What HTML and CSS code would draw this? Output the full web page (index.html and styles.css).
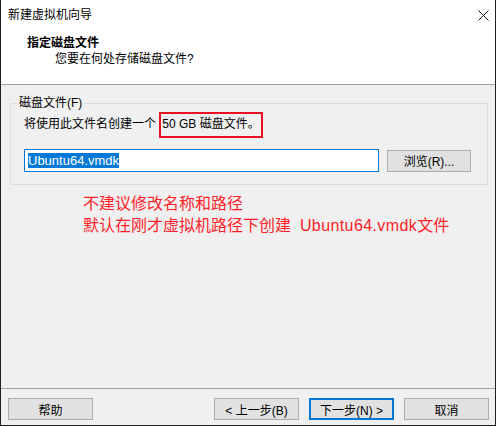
FILE: index.html
```html
<!DOCTYPE html>
<html lang="zh-CN">
  <head>
    <meta charset="UTF-8" />
    <title>新建虚拟机向导</title>
    <link rel="stylesheet" href="styles.css">
  </head>
  <body>
    <div class="window">
      <div class="titlebar">
        <span>新建虚拟机向导</span>
        <svg class="close" width="11" height="11" viewBox="0 0 11 11">
          <path d="M0.5 0.5 L10.5 10.5 M10.5 0.5 L0.5 10.5" stroke="#111" stroke-width="1" fill="none" />
        </svg>
      </div>

      <div class="header">
        <div class="header-title">指定磁盘文件</div>
        <div class="header-sub">您要在何处存储磁盘文件?</div>
      </div>

      <div class="content">
        <fieldset class="group">
          <legend>磁盘文件(F)</legend>
          <div class="info">将使用此文件名创建一个 <span class="mark">50 GB 磁盘文件。</span></div>
          <div class="file-row">
            <div class="file-input"><span class="selected">Ubuntu64.vmdk</span></div>
            <button class="btn browse">浏览(R)...</button>
          </div>
        </fieldset>

        <div class="note">
          <div>不建议修改名称和路径</div>
          <div>默认在刚才虚拟机路径下创建&nbsp;&nbsp;<span class="note-file">Ubuntu64.vmdk</span>文件</div>
        </div>
      </div>

      <div class="footer">
        <button class="btn">帮助</button>
        <div class="nav">
          <button class="btn">&lt; 上一步(B)</button>
          <button class="btn default">下一步(N) &gt;</button>
          <button class="btn">取消</button>
        </div>
      </div>
    </div>
  </body>
</html>
```

FILE: styles.css
```css
* {
  margin: 0;
  padding: 0;
  box-sizing: border-box;
}

body {
  background: #fff;
  font-family: "Liberation Sans", "Noto Sans CJK SC", sans-serif;
  font-size: 12px;
  color: #000;
}

.window {
  width: 496px;
  height: 426px;
  display: flex;
  flex-direction: column;
  border: 1px solid #1f1f1f;
  border-top: none;
  background: #f0f0f0;
}

.titlebar {
  height: 30px;
  background: #fff;
  display: flex;
  align-items: center;
  justify-content: space-between;
  padding: 0 6px 0 7px;
  line-height: 16px;
}

.close {
  display: block;
}

.header {
  height: 55px;
  background: #fff;
  border-bottom: 1px solid #a0a0a0;
  padding: 5px 0 0 26px;
  line-height: 16px;
}

.header-title {
  font-weight: bold;
}

.header-sub {
  padding-left: 28px;
}

.content {
  flex: 1;
  padding: 0 7px 0 9px;
}

.group {
  margin-top: 10px;
  border: 1px solid #dcdcdc;
  padding: 3px 8px 12px 13px;
}

.group legend {
  margin-left: -7px;
  padding: 0 2px;
  line-height: 16px;
}

.info {
  line-height: 16px;
  margin-top: 2px;
}

.mark {
  border: 2px solid #e81123;
  padding: 3px 1px 5px 1px;
}

.file-row {
  display: flex;
  align-items: center;
  margin-top: 17px;
}

.file-input {
  width: 355px;
  height: 23px;
  background: #fff;
  border: 1px solid #0078d7;
  padding: 2px 0 0 3px;
  font-size: 13px;
  line-height: 17px;
}

.selected {
  background: #0078d7;
  color: #fff;
}

.btn {
  width: 85px;
  height: 22px;
  background: #e1e1e1;
  border: 1px solid #adadad;
  font-family: inherit;
  font-size: 12px;
  color: #000;
}

.browse {
  margin-left: 8px;
  width: 84px;
}

.note {
  margin-top: 8px;
  padding-left: 73px;
  color: #ff1f2a;
  font-size: 16px;
  line-height: 22px;
}

.note-file {
  letter-spacing: 0.4px;
}

.footer {
  height: 37px;
  border-top: 1px solid #a0a0a0;
  display: flex;
  justify-content: space-between;
  padding: 9px 6px 0 7px;
}

.nav {
  display: flex;
  gap: 10px;
}

.default {
  border: 2px solid #0078d7;
}
```
